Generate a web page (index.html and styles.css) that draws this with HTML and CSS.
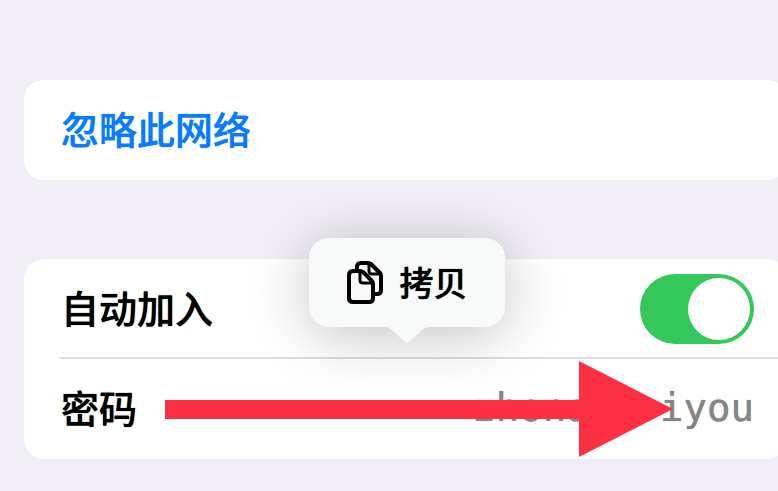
FILE: index.html
```html
<!DOCTYPE html>
<html lang="zh-CN">
<head>
<meta charset="UTF-8">
<meta name="viewport" content="width=device-width, initial-scale=1.0">
<title>无线局域网</title>
<link rel="stylesheet" href="styles.css">
</head>
<body>
<main class="settings">
<section class="card">
<button class="row forget-btn" type="button">忽略此网络</button>
</section>
<section class="card">
<div class="row">
<label for="auto-join">自动加入</label>
<input class="switch" type="checkbox" role="switch" id="auto-join" checked>
</div>
<div class="row">
<label for="password">密码</label>
<input class="password" type="text" id="password" value="zhonana-iyou" readonly>
</div>
<svg class="arrow" viewBox="0 0 508 96" aria-hidden="true">
<path d="M0 39H414V0L508 48L414 96V58H0Z"/>
</svg>
<button class="copy-menu" type="button">
<svg class="copy-icon" viewBox="0 0 36 43" aria-hidden="true">
<path d="M10 9V6Q10 2 14 2H21Q23 2 24 3L33 12Q34 13 34 15V29Q34 33 30 33H26"/>
<path class="fold" d="M22 3V10Q22 13 25 13H33"/>
<path d="M6 10H13Q15 10 16 11L25 20Q26 21 26 23V37Q26 41 22 41H6Q2 41 2 37V14Q2 10 6 10Z"/>
<path class="fold" d="M13 11V19Q13 22 16 22H25"/>
</svg>
<span>拷贝</span>
<svg class="tail" viewBox="0 0 46 18" aria-hidden="true">
<path d="M0 0V1Q5 1 9 5L21 16Q23 18 25 16L37 5Q41 1 46 1V0Z"/>
</svg>
</button>
</section>
</main>
</body>
</html>
```
FILE: styles.css
```css
html,body{
margin:0;
padding:0;
background:#f1eef5;
}
body{
overflow:hidden;
font-family:"Noto Sans CJK SC", sans-serif;
font-size:38px;
font-weight:500;
color:#000;
text-shadow:0 0 1px currentColor;
}
button,input{
margin:0;
border:0;
font:inherit;
color:inherit;
text-shadow:inherit;
background:none;
}
.settings{
display:flex;
flex-direction:column;
gap:79px;
padding:80px 0 32px 24px;
/* cards run past the right edge of the window */
margin-right:-9px;
}
.card{
position:relative;
background:#fff;
border-radius:20px;
}
.row{
display:flex;
align-items:center;
justify-content:space-between;
box-sizing:border-box;
width:100%;
min-height:100px;
padding:0 33px 0 37px;
line-height:56px;
}
.row label,.forget-btn{
padding-bottom:4px;
}
.row + .row{
position:relative;
}
.row + .row::before{
content:"";
position:absolute;
top:-2px;
left:35px;
right:0;
height:2px;
background:#dedee0;
}
.forget-btn{
color:#0a7aff;
cursor:pointer;
}
.switch{
appearance:none;
display:flex;
align-items:center;
box-sizing:border-box;
width:114px;
height:70px;
padding:4px;
border-radius:35px;
background:#34c759;
}
.switch::before{
content:"";
width:62px;
height:62px;
border-radius:50%;
background:#fff;
}
.switch:checked{
justify-content:flex-end;
}
.password{
flex:1;
min-width:0;
padding:0 0 2px;
text-align:right;
font-family:"DejaVu Sans Mono", monospace;
font-size:39px;
font-weight:400;
color:#858585;
outline:none;
}
.arrow{
position:absolute;
left:141px;
top:102px;
width:508px;
height:96px;
fill:#ff2f43;
}
.copy-menu{
position:absolute;
left:285px;
top:-21px;
display:flex;
align-items:center;
justify-content:center;
gap:17px;
width:196px;
height:89px;
padding:0;
border-radius:20px;
background:#f8fafa;
font-size:34px;
line-height:50px;
box-shadow:0 8px 60px rgba(0,0,0,.24);
cursor:pointer;
}
.copy-menu span{
padding-bottom:2px;
}
.tail{
position:absolute;
top:88px;
left:75px;
width:46px;
height:18px;
fill:#f8fafa;
}
.copy-icon{
width:36px;
height:43px;
fill:none;
stroke:#000;
stroke-width:4;
stroke-linejoin:round;
}
.copy-icon .fold{
stroke-width:3;
}
```
